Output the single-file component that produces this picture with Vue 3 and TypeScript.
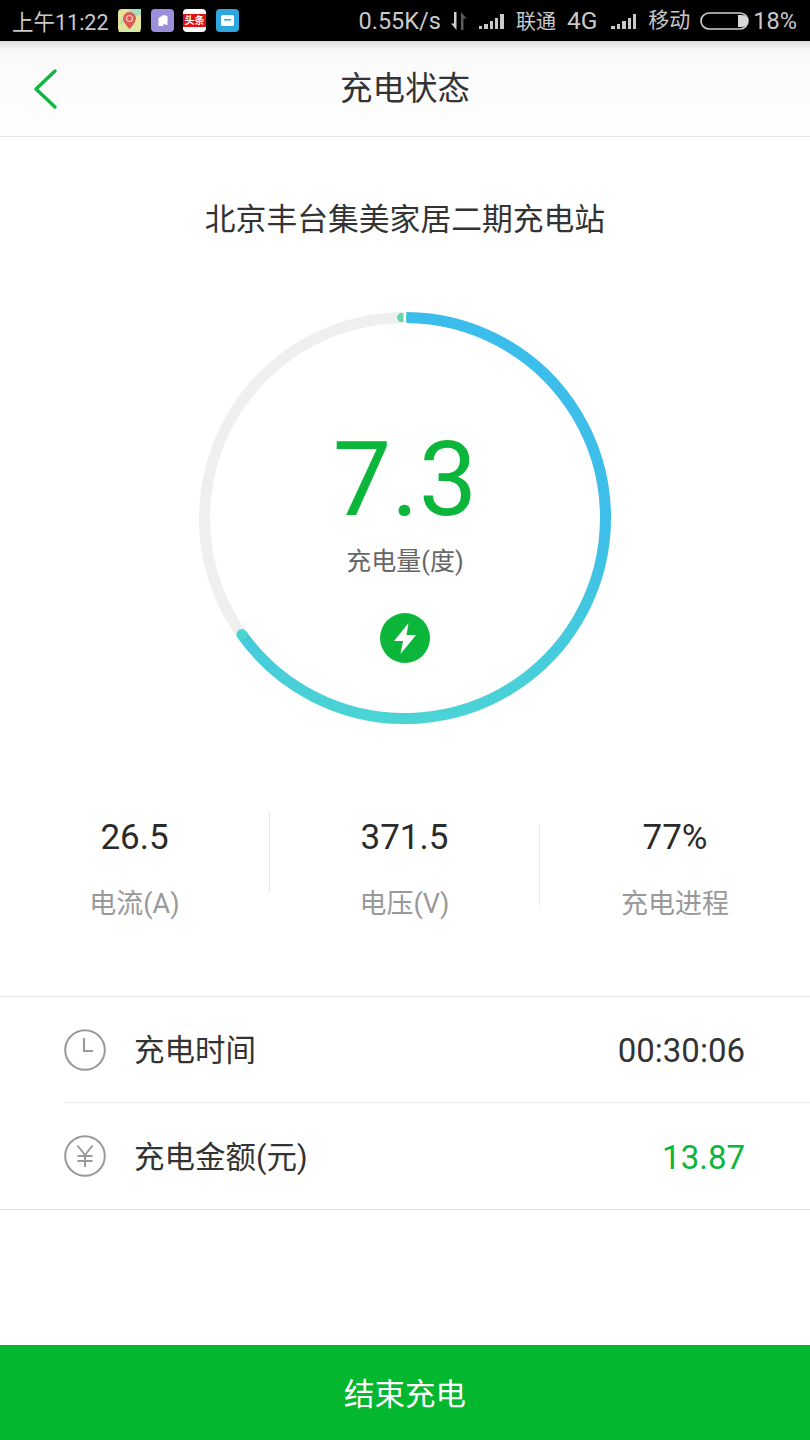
<script setup lang="ts">
interface Stat { value: string; label: string }
const stats: Stat[] = [
  { value: '26.5', label: '电流(A)' },
  { value: '371.5', label: '电压(V)' },
  { value: '77%', label: '充电进程' },
]
const signalBars = [3, 5, 8, 11, 15]
</script>

<template>
  <div class="page">
    <div class="status">
      <span class="time">上午11:22</span>
      <div class="apps">
        <svg class="app" viewBox="0 0 23 23">
          <rect width="23" height="23" rx="4" fill="#e6e39a" />
          <path d="M0 16L23 5V0H12Z" fill="#a6dcc0" />
          <path d="M0 23L10 14 23 23Z" fill="#d8e8a8" />
          <path d="M11.500 3a6.500 6.500 0 0 1 6.500 6.500c0 4-6.500 10.500-6.500 10.500S5 13.500 5 9.500A6.500 6.500 0 0 1 11.500 3z" fill="#e2574f" />
          <circle cx="11.500" cy="9.500" r="3" fill="none" stroke="#f6cfc8" stroke-width="1.200" />
        </svg>
        <svg class="app" viewBox="0 0 23 23">
          <rect width="23" height="23" rx="4" fill="#9b8fdc" />
          <path d="M7.500 9l5-3 4 1v9h-2v-1h-2v2h-5z" fill="#fff" />
        </svg>
        <div class="app toutiao"><span>头条</span></div>
        <svg class="app" viewBox="0 0 23 23">
          <rect width="23" height="23" rx="4" fill="#2ea7e0" />
          <rect x="5" y="6" width="13" height="11" rx="1.500" fill="#fff" />
          <rect x="8" y="10" width="7" height="1.500" fill="#2ea7e0" />
        </svg>
      </div>
      <div class="status-right">
        <span class="speed">0.55K/s</span>
        <svg class="arrows" viewBox="0 0 20 20">
          <path d="M5 1h2.500v18L2 12.500h3z" fill="#d0d0d0" />
          <path d="M12 19V1l5.500 6.500H14.500V19z" fill="#5a5a5a" />
        </svg>
        <div class="signal"><i v-for="h in signalBars" :key="h" :style="{ height: h + 'px' }"></i></div>
        <span class="carrier">联通</span>
        <span class="carrier g4">4G</span>
        <div class="signal second"><i v-for="h in signalBars" :key="h" :style="{ height: h + 'px' }"></i></div>
        <span class="carrier move">移动</span>
        <svg class="battery" viewBox="0 0 50 18">
          <rect x="1" y="1" width="47" height="16" rx="8" fill="none" stroke="#d0d0d0" stroke-width="1.600" />
          <path d="M38 3h4a6 6 0 0 1 0 12h-4z" fill="#d8d8d8" />
        </svg>
        <span class="percent">18%</span>
      </div>
    </div>

    <header class="nav">
      <svg class="back" viewBox="0 0 26 42">
        <path d="M23 3L4 21l19 18" fill="none" stroke="#0db83f" stroke-width="3.400" stroke-linecap="round" stroke-linejoin="round" />
      </svg>
      <h1>充电状态</h1>
    </header>

    <h2 class="station">北京丰台集美家居二期充电站</h2>

    <section class="gauge">
      <svg class="ring" viewBox="0 0 420 420">
        <defs>
          <linearGradient id="arc" gradientUnits="userSpaceOnUse" x1="0" y1="6" x2="0" y2="416">
            <stop offset="0" stop-color="#3bbdec" />
            <stop offset="0.55" stop-color="#3ebfe8" />
            <stop offset="1" stop-color="#4bd4d4" />
          </linearGradient>
        </defs>
        <circle cx="210" cy="210" r="200.500" fill="none" stroke="#efefef" stroke-width="11" />
        <path d="M206.500 9.530A200.500 200.500 0 0 1 208.500 9.500" fill="none" stroke="#66d6ae" stroke-width="9" stroke-linecap="round" />
        <path d="M208.500 3.500h2.500v13h-2.500z" fill="#fff" />
        <path
          d="M211.500 9.500A200.500 200.500 0 1 1 46.900 326.600"
          fill="none"
          stroke="url(#arc)"
          stroke-width="11"
        />
        <circle cx="46.900" cy="326.600" r="5.500" fill="#4bd4d4" />
      </svg>
      <div class="gauge-center">
        <div class="big">7.3</div>
        <div class="unit">充电量(度)</div>
        <svg class="bolt" viewBox="0 0 50 50">
          <circle cx="25" cy="25" r="25" fill="#0bb63a" />
          <path d="M28.500 10L14 28h9l-2.500 13L36 22h-9.500z" fill="#fff" />
        </svg>
      </div>
    </section>

    <section class="stats">
      <template v-for="(s, i) in stats" :key="s.label">
        <div class="stat">
          <div class="value">{{ s.value }}</div>
          <div class="label">{{ s.label }}</div>
        </div>
        <div v-if="i < 2" class="divider" :class="{ lower: i === 1 }"></div>
      </template>
    </section>

    <section class="rows">
      <div class="row first">
        <svg class="row-icon" viewBox="0 0 42 42">
          <circle cx="21" cy="21" r="19.800" fill="none" stroke="#999" stroke-width="2" />
          <path d="M20 9v13h9" fill="none" stroke="#999" stroke-width="2" />
        </svg>
        <span class="row-label">充电时间</span>
        <span class="row-value">00:30:06</span>
      </div>
      <div class="row">
        <svg class="row-icon" viewBox="0 0 42 42">
          <circle cx="21" cy="21" r="19.800" fill="none" stroke="#999" stroke-width="2" />
          <path d="M13.500 10.500L21 20l7.500-9.500M21 20v12M13.500 21h15M13.500 26h15" fill="none" stroke="#999" stroke-width="2" />
        </svg>
        <span class="row-label">充电金额(元)</span>
        <span class="row-value money">13.87</span>
      </div>
    </section>

    <button class="finish" type="button"><span>结束充电</span></button>
  </div>
</template>

<style scoped>
.page {
  width: 810px;
  min-height: 1440px;
  display: flex;
  flex-direction: column;
  background: #fff;
  font-family: Roboto, "Noto Sans CJK SC", sans-serif;
  color: #333;
}
.status {
  height: 41px;
  background: #000;
  display: flex;
  align-items: center;
  padding: 0 13px 0 12px;
  color: #c9c9c9;
  font-size: 23.500px;
}
.time { width: 107px; white-space: nowrap; font-size: 21.500px; }
.apps { display: flex; gap: 9.500px; margin-left: -1px; }
.app { width: 23px; height: 23px; display: block; }
.toutiao {
  background: #fff;
  border-radius: 4px;
  display: flex;
  align-items: center;
  justify-content: center;
}
.toutiao span {
  width: 23px;
  text-align: center;
  background: #e01010;
  color: #fff;
  font-size: 10px;
  line-height: 13px;
  font-weight: 700;
}
.status-right {
  margin-left: auto;
  display: flex;
  align-items: center;
  white-space: nowrap;
}
.arrows { width: 20px; height: 20px; margin-left: 8px; }
.signal {
  display: flex;
  align-items: flex-end;
  gap: 2px;
  height: 16px;
  margin-left: 10px;
  width: 26px;
}
.signal i { width: 3.400px; background: #c9c9c9; display: block; }
.signal.second { margin-left: 14px; }
.carrier { font-size: 20px; margin-left: 11px; }
.g4 { font-size: 24.500px; margin-left: 11px; }
.move { font-size: 21px; margin-left: 11px; line-height: 24px; margin-bottom: 2px; }
.battery { width: 50px; height: 18px; margin-left: 10px; }
.percent { margin-left: 3px; }

.nav {
  height: 95px;
  border-bottom: 1px solid #e4e4e4;
  background: linear-gradient(#dcdcdc 0, #f6f6f6 8px, #fbfbfb 22px, #fdfdfd 100%);
  display: grid;
  grid-template-columns: 1fr auto 1fr;
  align-items: center;
}
.back { width: 26px; height: 42px; margin-left: 32px; }
.nav h1 {
  margin: 2px 0 0;
  font-size: 32.500px;
  font-weight: 400;
  color: #333;
  grid-column: 2;
  line-height: 1;
}
.station {
  margin: 65px 0 0;
  text-align: center;
  font-size: 30.800px;
  line-height: 36px;
  font-weight: 400;
  color: #333;
}
.gauge {
  margin-top: 70px;
  height: 420px;
  display: grid;
  justify-items: center;
}
.ring, .gauge-center { grid-area: 1 / 1; }
.ring { width: 420px; height: 420px; display: block; }
.gauge-center {
  display: flex;
  flex-direction: column;
  align-items: center;
  padding-top: 120px;
}
.big {
  font-size: 104px;
  line-height: 104px;
  font-weight: 400;
  color: #0bb63a;
}
.unit {
  font-size: 25px;
  line-height: 32px;
  color: #666;
  margin-top: 14px;
}
.bolt { width: 50px; height: 50px; margin-top: 35px; display: block; }

.stats {
  margin-top: 84px;
  display: flex;
  height: 100px;
}
.stat { width: 269px; text-align: center; }
.stat:last-child { width: 270px; }
.divider { width: 1px; height: 80px; background: #e6e6e6; }
.divider.lower { margin-top: 13px; }
.value { font-size: 35px; line-height: 48px; color: #2b2b2b; margin-top: 2px; }
.label { font-size: 27px; line-height: 40px; color: #999; margin-top: 22px; }

.rows {
  margin-top: 84px;
  border-top: 1px solid #e4e4e4;
  border-bottom: 1px solid #e4e4e4;
}
.row {
  height: 106px;
  margin-left: 64px;
  padding-right: 65px;
  display: flex;
  align-items: center;
}
.row.first { height: 105px; border-bottom: 1px solid #ececec; }
.row-icon { width: 42px; height: 42px; display: block; }
.row-label { font-size: 30.500px; margin: 0 0 3px 28px; color: #333; }
.row-value { margin: 2px 0 0 auto; font-size: 33px; color: #333; }
.money { color: #0bb63a; }

.finish {
  margin-top: auto;
  height: 95px;
  border: 0;
  background: #03b72e;
  color: #fff;
  font-family: inherit;
  font-size: 30.500px;
  padding: 0 0 2px;
}
</style>
